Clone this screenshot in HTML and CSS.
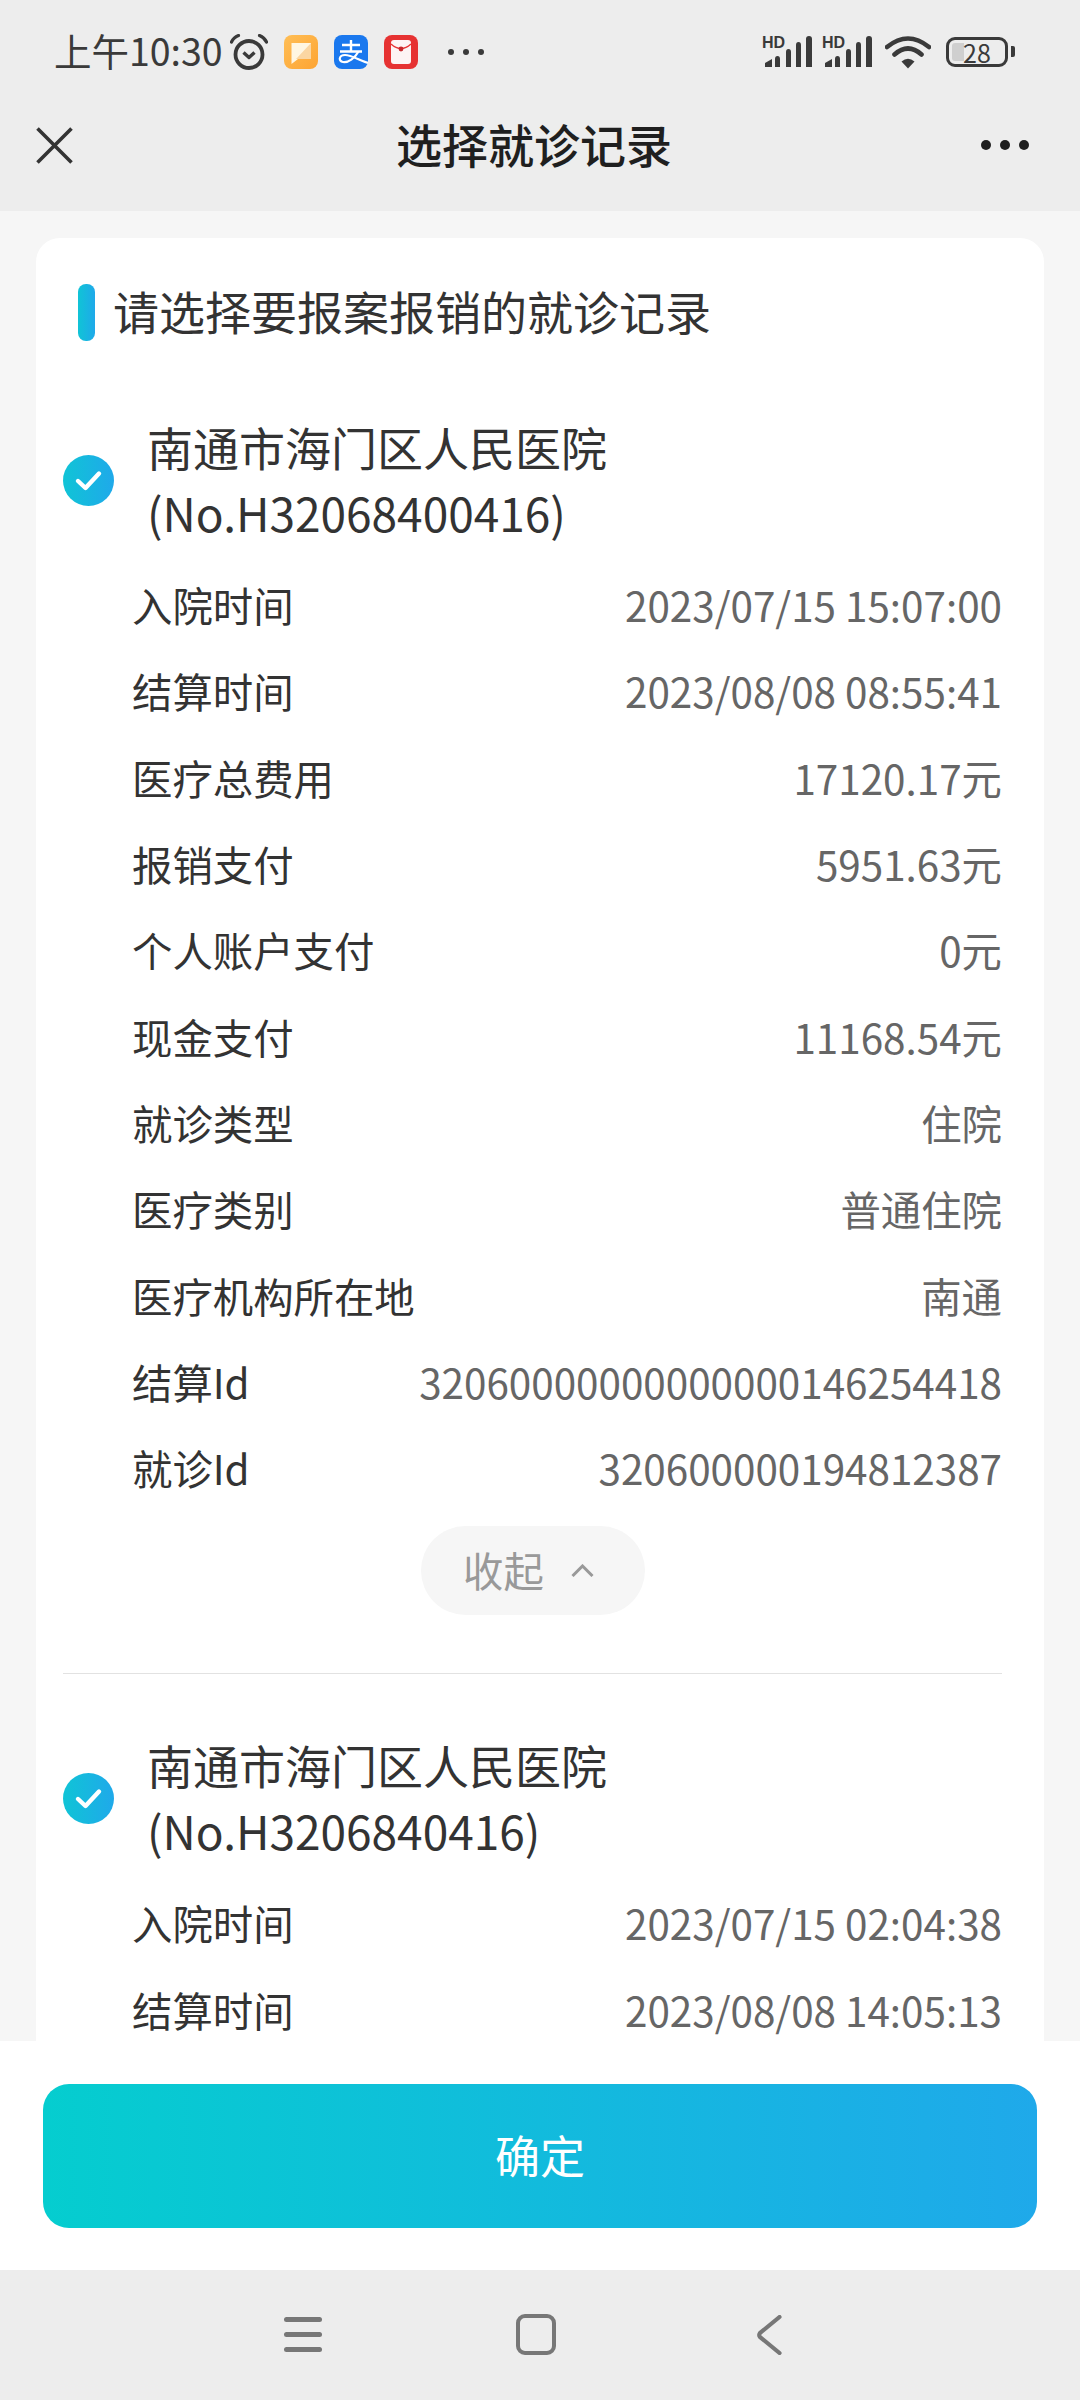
FILE: index.html
```html
<!DOCTYPE html>
<html lang="zh-CN">
<head>
    <meta charset="UTF-8">
    <meta name="viewport" content="width=device-width, initial-scale=1.0">
    <title>选择就诊记录</title>
    <link rel="stylesheet" href="styles.css">
</head>
<body>
    <div class="app">
        <div class="status-bar">
            <span class="time">上午10:30</span>
            <svg class="alarm" width="38" height="36" viewBox="0 0 38 36">
                <circle cx="19" cy="20.500" r="13.500" fill="none" stroke="#3a3a3a" stroke-width="3.800"/>
                <path d="M1.500 8 Q3.500 3.500 8.500 1.500 M36.500 8 Q34.500 3.500 29.500 1.500" fill="none" stroke="#3a3a3a" stroke-width="3.200" stroke-linecap="round"/>
                <path d="M13.500 18.500 L19 23.500 L24.500 18.500" fill="none" stroke="#3a3a3a" stroke-width="3.400" stroke-linejoin="round"/>
            </svg>
            <svg class="app-icon" width="34" height="34" viewBox="0 0 34 34">
                <defs>
                    <linearGradient id="orange" x1="0" y1="0" x2="1" y2="1">
                        <stop offset="0" stop-color="#ffbe55"/>
                        <stop offset="1" stop-color="#fda433"/>
                    </linearGradient>
                </defs>
                <rect width="34" height="34" rx="8" fill="url(#orange)"/>
                <path d="M7.500 8 H27 V24 H14 L7.500 29 Z" fill="#fff6e2"/>
                <path d="M27 8 V24 H12 Z" fill="#fbd6a2"/>
            </svg>
            <svg class="app-icon" width="34" height="34" viewBox="0 0 34 34">
                <rect width="34" height="34" rx="8" fill="#1a78ee"/>
                <path d="M8 10 H26 M17 5 V16 M6 16.500 H28" fill="none" stroke="#fff" stroke-width="2.400"/>
                <path d="M24.500 16.500 C21 23 14 28 9 27 C4 26 5 20 11 20 C17 20 25 25 34 28" fill="none" stroke="#fff" stroke-width="2.200"/>
            </svg>
            <svg class="app-icon" width="34" height="34" viewBox="0 0 34 34">
                <rect width="34" height="34" rx="8" fill="#e63232"/>
                <path d="M7 8 Q7 5 10 5 H24 Q27 5 27 8 V26 Q27 29 24 29 H10 Q7 29 7 26 Z" fill="#fdf4f4"/>
                <path d="M7 9 Q17 18 27 9" fill="none" stroke="#e63232" stroke-width="1.400"/>
                <circle cx="17" cy="14" r="2.400" fill="#c8282c"/>
            </svg>
            <div class="status-dots"><i></i><i></i><i></i></div>

            <div class="status-right">
                <svg class="signal" width="50" height="33" viewBox="0 0 50 33">
                    <text x="0" y="12.500" class="hd">HD</text>
                    <path d="M3 32 V28 L10 24 V32 Z M13 32 V24 Q13 21 15.500 21 Q18 21 18 24 V32 Z M24 32 V17 Q24 14 26.500 14 Q29 14 29 17 V32 Z M34 32 V10 Q34 7 36.500 7 Q39 7 39 10 V32 Z M44 32 V4 Q44 1 47 1 Q50 1 50 4 V32 Z" fill="#3a3a3a"/>
                </svg>
                <svg class="signal second" width="50" height="33" viewBox="0 0 50 33">
                    <text x="0" y="12.500" class="hd">HD</text>
                    <path d="M3 32 V28 L10 24 V32 Z M13 32 V24 Q13 21 15.500 21 Q18 21 18 24 V32 Z M24 32 V17 Q24 14 26.500 14 Q29 14 29 17 V32 Z M34 32 V10 Q34 7 36.500 7 Q39 7 39 10 V32 Z M44 32 V4 Q44 1 47 1 Q50 1 50 4 V32 Z" fill="#3a3a3a"/>
                </svg>
                <svg class="wifi" width="46" height="34" viewBox="0 0 46 34">
                    <path d="M2 12 Q23 -5 44 12 M9.500 19.500 Q23 7.500 36.500 19.500" fill="none" stroke="#3a3a3a" stroke-width="4.600" stroke-linecap="round"/>
                    <path d="M16.500 26.500 Q23 21 29.500 26.500 L23 33.500 Z" fill="#3a3a3a"/>
                </svg>
                <div class="battery">
                    <div class="battery-level"></div>
                    <span class="battery-text">28</span>
                </div>
                <div class="battery-nub"></div>
            </div>
        </div>

        <div class="nav-bar">
            <svg class="close-icon" width="37" height="37" viewBox="0 0 37 37">
                <path d="M1.500 1.500 L35.500 35.500 M35.500 1.500 L1.500 35.500" stroke="#333" stroke-width="3.600"/>
            </svg>
            <h1 class="nav-title">选择就诊记录</h1>
            <div class="more"><i></i><i></i><i></i></div>
        </div>

        <div class="content">
            <div class="card">
                <div class="section-title">
                    <span class="section-mark"></span>
                    <span class="section-text">请选择要报案报销的就诊记录</span>
                </div>

                <div class="record">
                    <div class="record-head">
                        <svg class="check" width="51" height="51" viewBox="0 0 51 51">
                            <defs>
                                <linearGradient id="teal" x1="0" y1="0" x2="1" y2="0">
                                    <stop offset="0" stop-color="#10c4d6"/>
                                    <stop offset="1" stop-color="#1fa9ea"/>
                                </linearGradient>
                            </defs>
                            <circle cx="25.500" cy="25.500" r="25.500" fill="url(#teal)"/>
                            <path d="M15 26 L22.500 33 L36 18.500" fill="none" stroke="#fff" stroke-width="4.400" stroke-linecap="round" stroke-linejoin="round"/>
                        </svg>
                        <div class="hospital">南通市海门区人民医院<br>(No.H32068400416)</div>
                    </div>
                    <div class="row"><span class="label">入院时间</span><span class="value">2023/07/15 15:07:00</span></div>
                    <div class="row"><span class="label">结算时间</span><span class="value">2023/08/08 08:55:41</span></div>
                    <div class="row"><span class="label">医疗总费用</span><span class="value">17120.17元</span></div>
                    <div class="row"><span class="label">报销支付</span><span class="value">5951.63元</span></div>
                    <div class="row"><span class="label">个人账户支付</span><span class="value">0元</span></div>
                    <div class="row"><span class="label">现金支付</span><span class="value">11168.54元</span></div>
                    <div class="row"><span class="label">就诊类型</span><span class="value">住院</span></div>
                    <div class="row"><span class="label">医疗类别</span><span class="value">普通住院</span></div>
                    <div class="row"><span class="label">医疗机构所在地</span><span class="value">南通</span></div>
                    <div class="row"><span class="label">结算Id</span><span class="value">32060000000000000146254418</span></div>
                    <div class="row"><span class="label">就诊Id</span><span class="value">320600000194812387</span></div>
                    <div class="collapse">
                        <span class="collapse-text">收起</span>
                        <svg width="23" height="13" viewBox="0 0 23 13">
                            <path d="M1.500 12 L11.500 2 L21.500 12" fill="none" stroke="#999" stroke-width="3"/>
                        </svg>
                    </div>
                </div>

                <div class="record record-next">
                    <div class="record-head">
                        <svg class="check" width="51" height="51" viewBox="0 0 51 51">
                            <circle cx="25.500" cy="25.500" r="25.500" fill="url(#teal)"/>
                            <path d="M15 26 L22.500 33 L36 18.500" fill="none" stroke="#fff" stroke-width="4.400" stroke-linecap="round" stroke-linejoin="round"/>
                        </svg>
                        <div class="hospital">南通市海门区人民医院<br>(No.H3206840416)</div>
                    </div>
                    <div class="row"><span class="label">入院时间</span><span class="value">2023/07/15 02:04:38</span></div>
                    <div class="row"><span class="label">结算时间</span><span class="value">2023/08/08 14:05:13</span></div>
                </div>
            </div>
        </div>

        <div class="footer">
            <button class="confirm" type="button">确定</button>
        </div>

        <div class="system-nav">
            <div class="menu-key"><i></i><i></i><i></i></div>
            <div class="home-key"></div>
            <svg class="back-key" width="26" height="40" viewBox="0 0 26 40">
                <path d="M23.500 2 L4 18 Q2.500 20 4 22 L23.500 38" fill="none" stroke="#777" stroke-width="4.200" stroke-linecap="round"/>
            </svg>
        </div>
    </div>
</body>
</html>
```

FILE: styles.css
```css
* {
    box-sizing: border-box;
}

body {
    margin: 0;
    font-family: "Noto Sans CJK SC", "Noto Sans", sans-serif;
    background-color: #ededed;
    color: #333;
}

.app {
    display: flex;
    flex-direction: column;
    width: 1080px;
    height: 2400px;
    overflow: hidden;
}

/* status bar */
.status-bar {
    display: flex;
    align-items: center;
    height: 103px;
    padding: 0 65px 0 54px;
    background-color: #ededed;
    color: #3a3a3a;
}

.time {
    width: 176px;
    padding-bottom: 3px;
    font-size: 37.5px;
    line-height: 40px;
    white-space: nowrap;
}

.alarm {
    flex: none;
}

.app-icon {
    flex: none;
    margin-left: 16px;
}

.status-dots {
    display: flex;
    gap: 9px;
    margin-left: 30px;
}

.status-dots i {
    width: 6px;
    height: 6px;
    border-radius: 50%;
    background-color: #3a3a3a;
}

.status-right {
    display: flex;
    align-items: center;
    margin-left: auto;
}

.signal.second {
    margin-left: 10px;
}

.hd {
    font-family: "Liberation Sans", sans-serif;
    font-size: 16px;
    font-weight: 700;
    fill: #3a3a3a;
}

.wifi {
    margin-left: 13px;
}

.battery {
    position: relative;
    width: 62px;
    height: 30px;
    margin-left: 15px;
    border: 3px solid #3a3a3a;
    border-radius: 9px;
}

.battery-level {
    position: absolute;
    top: 3px;
    bottom: 3px;
    left: 3px;
    width: 12px;
    border-radius: 3px 0 0 3px;
    background-color: #cfcfcf;
}

.battery-text {
    position: absolute;
    inset: 0;
    font-size: 25px;
    line-height: 24px;
    text-align: center;
    color: #3a3a3a;
}

.battery-nub {
    width: 4px;
    height: 11px;
    margin-left: 3px;
    border-radius: 0 2px 2px 0;
    background-color: #3a3a3a;
}

/* title bar */
.nav-bar {
    display: flex;
    align-items: center;
    justify-content: space-between;
    height: 108px;
    padding: 0 51px 24px 36px;
}

.close-icon {
    flex: none;
}

.nav-title {
    margin: 0 0 0 14px;
    padding-bottom: 5px;
    font-size: 46px;
    font-weight: 500;
    line-height: 60px;
    color: #1f1f1f;
}

.more {
    display: flex;
    gap: 9px;
}

.more i {
    width: 10px;
    height: 10px;
    border-radius: 50%;
    background-color: #1f1f1f;
}

/* list */
.content {
    flex: 1;
    min-height: 0;
    padding: 27px 36px 0;
    overflow: hidden;
    background-color: #f6f6f6;
}

.card {
    padding: 46px 42px 0 27px;
    border-radius: 24px 24px 0 0;
    background-color: #fff;
}

.section-title {
    display: flex;
    align-items: center;
    gap: 18px;
    height: 57px;
    padding-left: 15px;
    font-size: 46px;
    color: #333;
}

.section-mark {
    width: 17px;
    height: 57px;
    border-radius: 8px;
    background: linear-gradient(90deg, #10c4d6, #1fa9ea);
}

.section-text {
    padding-bottom: 6px;
}

.record {
    padding-top: 72px;
}

.record-head {
    display: flex;
    align-items: center;
    gap: 33px;
    margin-bottom: 16px;
}

.check {
    flex: none;
}

.hospital {
    padding-bottom: 3px;
    font-size: 46px;
    line-height: 66px;
    color: #333;
}

.row {
    display: flex;
    align-items: center;
    justify-content: space-between;
    height: 86.3px;
    padding: 0 0 5px 69px;
    font-size: 40.4px;
}

.label {
    color: #333;
}

.value {
    color: #666;
}

.collapse {
    display: flex;
    align-items: center;
    justify-content: center;
    gap: 27px;
    width: 224px;
    height: 89px;
    margin: 13px 0 58px 358px;
    padding-right: 9px;
    border-radius: 45px;
    background-color: #f6f6f6;
    font-size: 40.4px;
    color: #999;
}

.collapse-text {
    padding-bottom: 3px;
}

.record-next {
    padding-top: 57px;
    border-top: 1px solid #e2e2e2;
}

/* bottom button */
.footer {
    height: 229px;
    padding: 43px 43px 0;
    background-color: #fff;
}

.confirm {
    display: block;
    width: 100%;
    height: 144px;
    padding: 0 0 3px;
    border: none;
    border-radius: 26px;
    background: linear-gradient(90deg, #05cdcf, #1fa9ea);
    font-family: inherit;
    font-size: 45px;
    color: #fff;
}

/* system navigation */
.system-nav {
    display: flex;
    align-items: center;
    height: 130px;
    padding: 0 0 1px 284px;
    background-color: #ededed;
}

.menu-key {
    display: flex;
    flex-direction: column;
    gap: 10px;
    width: 38px;
}

.menu-key i {
    height: 5px;
    border-radius: 3px;
    background-color: #777;
}

.home-key {
    width: 40px;
    height: 41px;
    margin-left: 194px;
    border: 4.5px solid #777;
    border-radius: 9px;
}

.back-key {
    margin-left: 200px;
}
```
